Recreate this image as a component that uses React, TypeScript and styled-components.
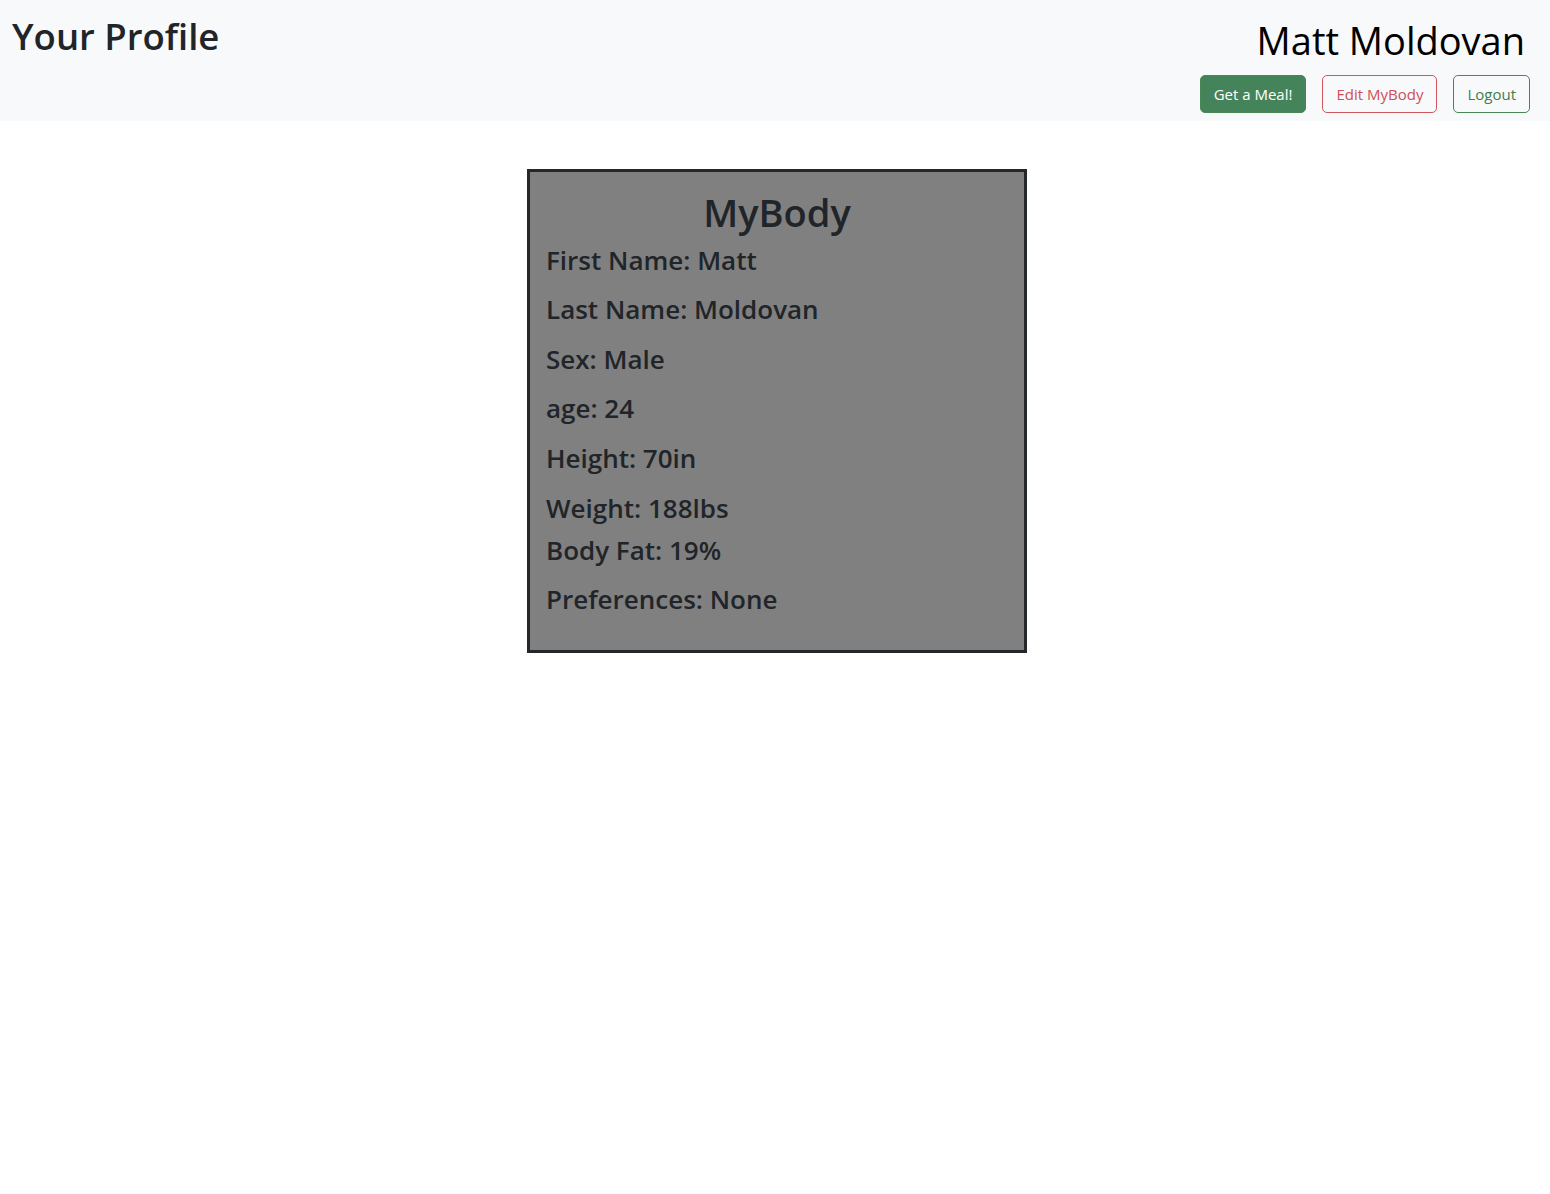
import styled, { createGlobalStyle } from 'styled-components'

const GlobalStyle = createGlobalStyle`
    body {
        margin: 0;
        font-family: "Open Sans", "Noto Sans", sans-serif;
        color: #212529;
        background: #fff;
    }
`

const Header = styled.header`
    display: flex;
    justify-content: space-between;
    height: 121px;
    background: #f8f9fa;
    box-sizing: border-box;
    padding: 0 20px 0 12px;
`

const PageTitle = styled.h1`
    margin: 15px 0 0 0;
    font-size: 36.5px;
    font-weight: 600;
    line-height: 1.2;
`

const UserCol = styled.div`
    display: flex;
    flex-direction: column;
    align-items: flex-end;
`

const UserName = styled.div`
    margin: 18px 5px 0 0;
    font-size: 38px;
    font-weight: 400;
    line-height: 1.2;
    color: #000;
`

const ButtonRow = styled.div`
    display: flex;
    gap: 16px;
    margin-top: 11px;
`

const Button = styled.button<{ $variant: 'solid' | 'danger' | 'outline' }>`
    height: 38px;
    padding: 0 13px;
    font-family: inherit;
    font-size: 15px;
    border-radius: 5px;
    border: 1px solid ${p => (p.$variant === 'danger' ? '#d2565d' : '#4a8558')};
    background: ${p => (p.$variant === 'solid' ? '#45845a' : 'transparent')};
    color: ${p => (p.$variant === 'solid' ? '#fff' : p.$variant === 'danger' ? '#cf4f57' : '#3f7d50')};
`

const Main = styled.main`
    display: flex;
    justify-content: center;
    padding-top: 48px;
    padding-left: 4px;
`

const Card = styled.section`
    width: 500px;
    box-sizing: border-box;
    background: #808080;
    border: 3px solid #25282b;
    padding: 18px 16px 26px;
`

const CardTitle = styled.h1`
    margin: 0 0 7px;
    text-align: center;
    font-size: 38px;
    font-weight: 600;
    line-height: 1.2;
`

const Field = styled.h3<{ $gap: number }>`
    margin: 0 0 ${p => p.$gap}px;
    font-size: 26px;
    font-weight: 600;
    line-height: 34px;
`

const fields: [string, number][] = [
    ['First Name: Matt', 15.6],
    ['Last Name: Moldovan', 15.6],
    ['Sex: Male', 15.6],
    ['age: 24', 15.6],
    ['Height: 70in', 15.6],
    ['Weight: 188lbs', 8],
    ['Body Fat: 19%', 15],
    ['Preferences: None', 8],
]

const App = () => {
    return (
        <>
            <GlobalStyle />
            <Header>
                <PageTitle>Your Profile</PageTitle>
                <UserCol>
                    <UserName>Matt Moldovan</UserName>
                    <ButtonRow>
                        <Button $variant='solid'>Get a Meal!</Button>
                        <Button $variant='danger'>Edit MyBody</Button>
                        <Button $variant='outline'>Logout</Button>
                    </ButtonRow>
                </UserCol>
            </Header>
            <Main>
                <Card>
                    <CardTitle>MyBody</CardTitle>
                    {fields.map(([text, gap]) => (
                        <Field key={text} $gap={gap}>{text}</Field>
                    ))}
                </Card>
            </Main>
        </>
    )
}

export default App
